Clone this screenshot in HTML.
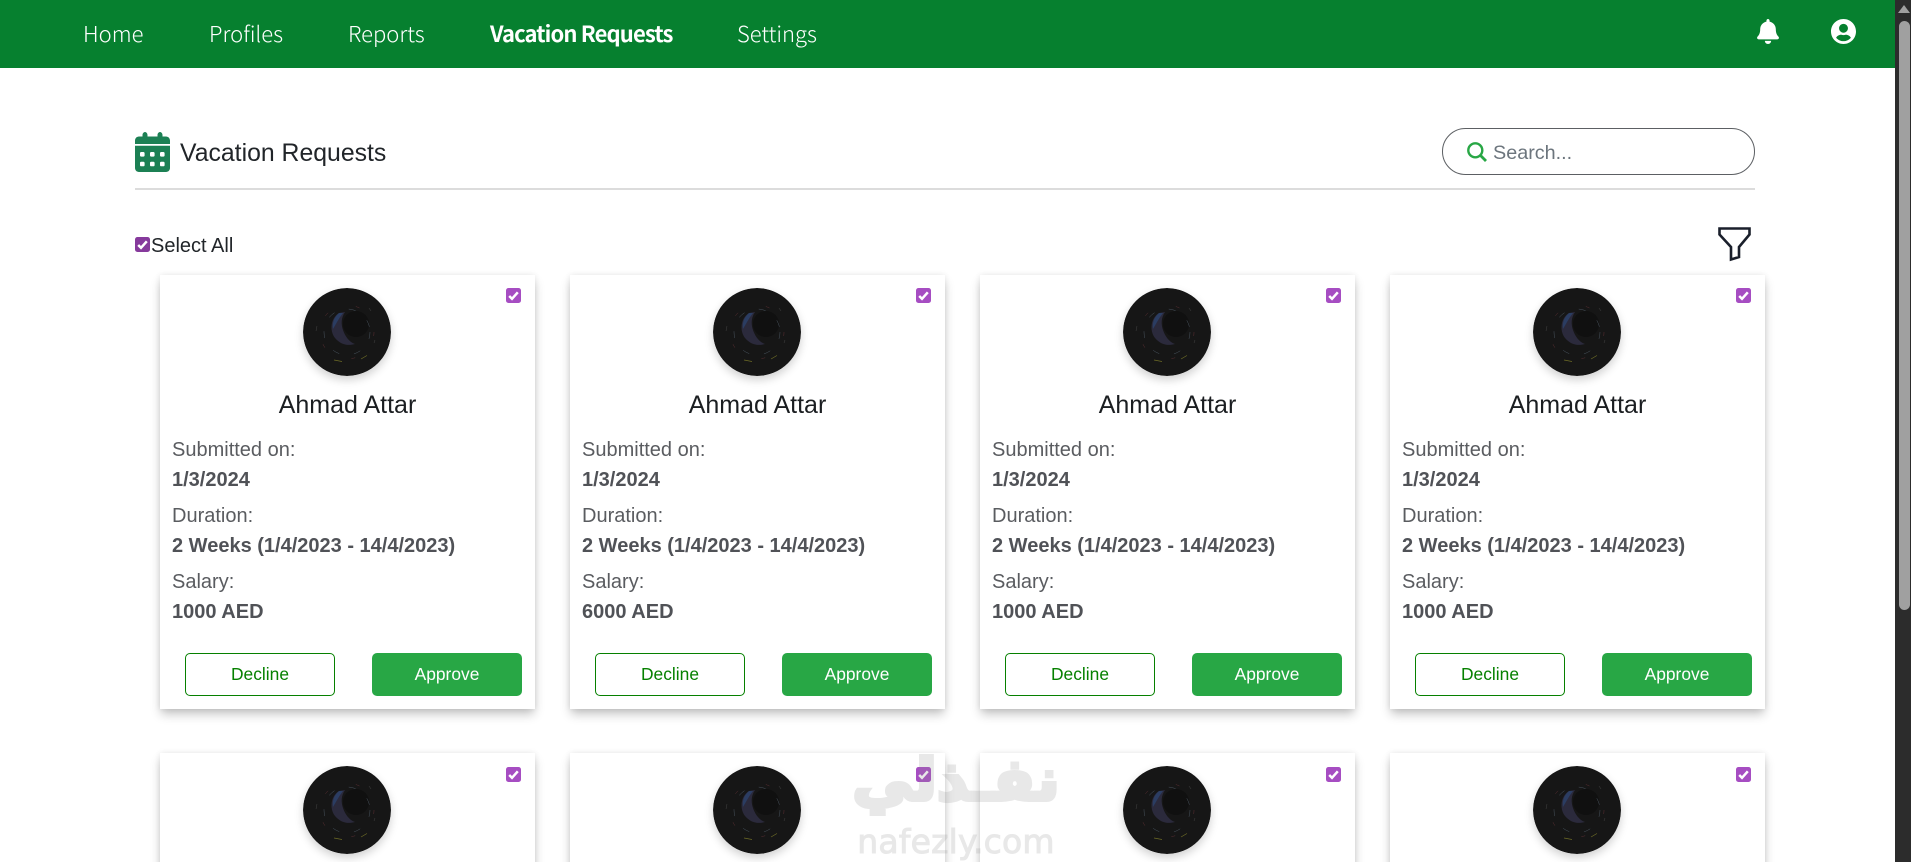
<!DOCTYPE html>
<html lang="en"><head><meta charset="utf-8"><title>Vacation Requests</title>
<style>
html,body{margin:0;padding:0;width:1911px;height:862px;overflow:hidden;background:#fff}
body{position:relative;font-family:"Liberation Sans",Arial,sans-serif;color:#212529}
.abs{position:absolute;white-space:nowrap}
.nav{position:absolute;left:0;top:0;width:1895px;height:68px;background:#06802f}
.nav a{position:absolute;top:0;line-height:66px;color:#fff;font-family:"Noto Sans CJK JP","Liberation Sans",sans-serif;font-size:22px;font-weight:300;white-space:nowrap;text-decoration:none}
.nav a.on{font-weight:700;font-size:22px;letter-spacing:-.87px}
.sb{position:absolute;left:1895px;top:0;width:16px;height:862px;background:#2c2c2c}
.sb i{position:absolute;left:4px;top:21px;width:11px;height:589px;background:#a0a0a0;border-radius:6px}
.sb b{position:absolute;left:3px;top:5px;width:0;height:0;border-left:6px solid transparent;border-right:6px solid transparent;border-bottom:8px solid #a0a0a0}
.card{position:absolute;width:375px;height:434px;background:#fff;box-shadow:0 6px 10px -1px rgba(0,0,0,.24),0 0 6px rgba(0,0,0,.08)}
.card .av{position:absolute;left:143px;top:13px;width:88px;height:88px;border-radius:50%;box-shadow:0 4px 9px rgba(0,0,0,.18)}
.card .ck{position:absolute;left:346px;top:13px}
.r2 .ck{top:14px}
.card .nm{position:absolute;left:0;width:375px;top:115px;text-align:center;font-size:25px;line-height:30px;color:#1b1e21}
.card p{position:absolute;left:12px;margin:0;font-size:20px;line-height:24px;color:#5a5c60;white-space:nowrap}
.card p.b{font-weight:700;color:#505257}
.btn{position:absolute;top:378px;width:150px;height:43px;box-sizing:border-box;border-radius:5px;text-align:center;font-size:17.4px;line-height:40px}
.d{left:25px;border:1px solid #068000;color:#068000;background:#fff}
.a{left:212px;background:#28a745;color:#fff;line-height:42px}
.wm{position:absolute;color:#8f8f8f;opacity:.2;white-space:nowrap;pointer-events:none}
</style></head><body>
<svg width="0" height="0" style="position:absolute">
<defs>
<symbol id="avatar" viewBox="0 0 88 88">
<circle cx="44" cy="44" r="44" fill="#161616"/>
<path d="M36 25C28 30 26 42 32 50C38 57 45 58 52 56C46 54 42 48 40 42C38 36 38 30 42 24Z" fill="#2b2a3c"/>
<path d="M36 25C31 29 29 35 30 41C33 36 36 30 40 25Z" fill="#2b3d62"/>
<circle cx="53" cy="36" r="13" fill="#101010"/>
<circle cx="44" cy="44" r="23" fill="none" stroke="#4a5560" stroke-width=".5" stroke-dasharray="7 15"/>
<circle cx="44" cy="44" r="27" fill="none" stroke="#5c2f33" stroke-width=".5" stroke-dasharray="4 30"/>
<path d="M31 72l8 1.500M58 71l6-3.500" stroke="#6e6c26" stroke-width=".7" fill="none"/>
<path d="M14 38l-1 5M66 20l2 3M72 52l-1 3" stroke="#444" stroke-width=".5" fill="none"/>
</symbol>
<symbol id="chk" viewBox="0 0 15 15">
<rect width="15" height="15" rx="2.500" fill="currentColor"/>
<path d="M3.200 8l2.800 2.800 5.800-6.500" fill="none" stroke="#fff" stroke-width="2.500"/>
</symbol>
</defs>
</svg>

<div class="nav">
<a style="left:83px">Home</a>
<a style="left:209px">Profiles</a>
<a style="left:348px">Reports</a>
<a class="on" style="left:490px">Vacation Requests</a>
<a style="left:737px">Settings</a>
<svg class="abs" style="left:1757px;top:19px" width="22" height="25" viewBox="0 0 448 512"><path fill="#fff" d="M224 512c35.32 0 63.97-28.65 63.97-64H160.03c0 35.35 28.65 64 63.97 64zm215.39-149.71c-19.32-20.76-55.47-51.99-55.47-154.29 0-77.7-54.48-139.9-127.94-155.16V32c0-17.67-14.32-32-31.98-32s-31.98 14.33-31.98 32v20.84C118.56 68.1 64.08 130.3 64.08 208c0 102.3-36.15 133.53-55.47 154.29-6 6.45-8.66 14.16-8.61 21.71.11 16.4 12.98 32 32.1 32h383.8c19.12 0 32-15.6 32.1-32 .05-7.55-2.61-15.27-8.61-21.71z"/></svg>
<svg class="abs" style="left:1831px;top:19px" width="25" height="25" viewBox="0 8 496 496"><path fill="#fff" d="M248 8C111 8 0 119 0 256s111 248 248 248 248-111 248-248S385 8 248 8zm0 96c48.6 0 88 39.4 88 88s-39.4 88-88 88-88-39.4-88-88 39.4-88 88-88zm0 344c-58.7 0-111.3-26.6-146.5-68.2 18.8-35.4 55.6-59.8 98.5-59.8 2.4 0 4.8.4 7.1 1.1 13 4.2 26.6 6.9 40.9 6.9 14.3 0 28-2.7 40.9-6.9 2.3-.7 4.7-1.1 7.1-1.1 42.9 0 79.7 24.4 98.5 59.8C359.3 421.4 306.7 448 248 448z"/></svg>
</div>
<div class="sb"><b></b><i></i></div>

<svg class="abs" style="left:135px;top:132px" width="35" height="40" viewBox="0 0 35 40">
<path fill="#1c8054" d="M7.500 4.500V3C7.500 1.600 8.600 0 10 0s2.500 1.600 2.500 3v1.500h10V3c0-1.400 1.100-3 2.500-3s2.500 1.600 2.500 3v1.500H31c2.200 0 4 1.800 4 4V12H0V8.500c0-2.200 1.800-4 4-4z"/>
<path fill="#1c8054" fill-rule="evenodd" d="M0 13.800h35V36c0 2.200-1.800 4-4 4H4c-2.200 0-4-1.800-4-4zM6.200 20a1.200 1.200 0 0 0-1.200 1.200v2.200c0 .7.500 1.200 1.200 1.200h2.200c.7 0 1.200-.5 1.200-1.200v-2.200c0-.7-.5-1.200-1.200-1.200zm10 0a1.200 1.200 0 0 0-1.200 1.200v2.200c0 .7.500 1.200 1.200 1.200h2.200c.7 0 1.200-.5 1.200-1.200v-2.200c0-.7-.5-1.200-1.200-1.200zm10 0a1.200 1.200 0 0 0-1.200 1.200v2.200c0 .7.500 1.200 1.200 1.200h2.200c.7 0 1.200-.5 1.200-1.200v-2.200c0-.7-.5-1.200-1.200-1.200zm-20 9.700A1.200 1.200 0 0 0 5 30.900v2.200c0 .7.500 1.200 1.200 1.200h2.200c.7 0 1.200-.5 1.200-1.200v-2.200c0-.7-.5-1.200-1.200-1.200zm10 0a1.200 1.200 0 0 0-1.200 1.200v2.200c0 .7.500 1.200 1.200 1.200h2.200c.7 0 1.200-.5 1.200-1.200v-2.200c0-.7-.5-1.200-1.200-1.200zm10 0a1.200 1.200 0 0 0-1.200 1.200v2.200c0 .7.500 1.200 1.200 1.200h2.200c.7 0 1.200-.5 1.200-1.200v-2.200c0-.7-.5-1.200-1.200-1.200z"/>
</svg>
<div class="abs" style="left:180px;top:139px;font-size:24.8px;line-height:30px;color:#212529">Vacation Requests</div>

<div class="abs" style="left:1442px;top:128px;width:313px;height:47px;box-sizing:border-box;border:1.3px solid #5c5f63;border-radius:24px;background:#fff"></div>
<svg class="abs" style="left:1467px;top:142px" width="20" height="20" viewBox="0 0 20 20"><circle cx="8.300" cy="8.300" r="7" fill="none" stroke="#28a745" stroke-width="2.400"/><path d="M13.300 13.300L19 19" stroke="#28a745" stroke-width="2.800" fill="none"/></svg>
<div class="abs" style="left:1493px;top:141px;font-size:19.8px;line-height:24px;color:#6c757d">Search...</div>

<div class="abs" style="left:135px;top:188px;width:1620px;height:2px;background:#dcdcdc"></div>

<svg class="abs" style="left:135px;top:237px;color:#863a9c" width="15" height="15"><use href="#chk"/></svg>
<div class="abs" style="left:151px;top:233.500px;font-size:20px;line-height:24px;color:#212529">Select All</div>

<svg class="abs" style="left:1700px;top:220px" width="60" height="50" viewBox="1700 220 60 50"><path d="M1719.500 228.500H1749.500V234.500L1739 247V257L1731 259.500V247L1719.500 234.500Z" fill="#fff" stroke="#1a1f2b" stroke-width="2.600"/></svg>

<div class="card" style="left:160px;top:275px">
<svg class="av"><use href="#avatar"/></svg><svg class="ck" width="15" height="15" style="color:#a64dc2"><use href="#chk"/></svg>
<div class="nm">Ahmad Attar</div>
<p style="top:163px">Submitted on:</p><p class="b" style="top:193px">1/3/2024</p>
<p style="top:229px">Duration:</p><p class="b" style="top:259px">2 Weeks (1/4/2023 - 14/4/2023)</p>
<p style="top:295px">Salary:</p><p class="b" style="top:325px">1000 AED</p>
<div class="btn d">Decline</div><div class="btn a">Approve</div>
</div>
<div class="card" style="left:570px;top:275px">
<svg class="av"><use href="#avatar"/></svg><svg class="ck" width="15" height="15" style="color:#a64dc2"><use href="#chk"/></svg>
<div class="nm">Ahmad Attar</div>
<p style="top:163px">Submitted on:</p><p class="b" style="top:193px">1/3/2024</p>
<p style="top:229px">Duration:</p><p class="b" style="top:259px">2 Weeks (1/4/2023 - 14/4/2023)</p>
<p style="top:295px">Salary:</p><p class="b" style="top:325px">6000 AED</p>
<div class="btn d">Decline</div><div class="btn a">Approve</div>
</div>
<div class="card" style="left:980px;top:275px">
<svg class="av"><use href="#avatar"/></svg><svg class="ck" width="15" height="15" style="color:#a64dc2"><use href="#chk"/></svg>
<div class="nm">Ahmad Attar</div>
<p style="top:163px">Submitted on:</p><p class="b" style="top:193px">1/3/2024</p>
<p style="top:229px">Duration:</p><p class="b" style="top:259px">2 Weeks (1/4/2023 - 14/4/2023)</p>
<p style="top:295px">Salary:</p><p class="b" style="top:325px">1000 AED</p>
<div class="btn d">Decline</div><div class="btn a">Approve</div>
</div>
<div class="card" style="left:1390px;top:275px">
<svg class="av"><use href="#avatar"/></svg><svg class="ck" width="15" height="15" style="color:#a64dc2"><use href="#chk"/></svg>
<div class="nm">Ahmad Attar</div>
<p style="top:163px">Submitted on:</p><p class="b" style="top:193px">1/3/2024</p>
<p style="top:229px">Duration:</p><p class="b" style="top:259px">2 Weeks (1/4/2023 - 14/4/2023)</p>
<p style="top:295px">Salary:</p><p class="b" style="top:325px">1000 AED</p>
<div class="btn d">Decline</div><div class="btn a">Approve</div>
</div>

<div class="card r2" style="left:160px;top:753px"><svg class="av"><use href="#avatar"/></svg><svg class="ck" width="15" height="15" style="color:#a64dc2"><use href="#chk"/></svg></div>
<div class="card r2" style="left:570px;top:753px"><svg class="av"><use href="#avatar"/></svg><svg class="ck" width="15" height="15" style="color:#a64dc2"><use href="#chk"/></svg></div>
<div class="card r2" style="left:980px;top:753px"><svg class="av"><use href="#avatar"/></svg><svg class="ck" width="15" height="15" style="color:#a64dc2"><use href="#chk"/></svg></div>
<div class="card r2" style="left:1390px;top:753px"><svg class="av"><use href="#avatar"/></svg><svg class="ck" width="15" height="15" style="color:#a64dc2"><use href="#chk"/></svg></div>

<div class="wm" dir="rtl" style="left:850px;top:740px;width:212px;height:80px;text-align:center;font-family:'DejaVu Sans',sans-serif;font-weight:700;font-size:58px;line-height:80px;-webkit-text-stroke:4px #8f8f8f;transform:scaleX(1.05)">نفـذلي</div>
<div class="wm" style="left:855px;top:824px;width:202px;text-align:center;font-family:'DejaVu Sans',sans-serif;font-weight:400;font-size:33px;line-height:36px;letter-spacing:.2px;-webkit-text-stroke:1px #8f8f8f">nafezly.com</div>
</body></html>
